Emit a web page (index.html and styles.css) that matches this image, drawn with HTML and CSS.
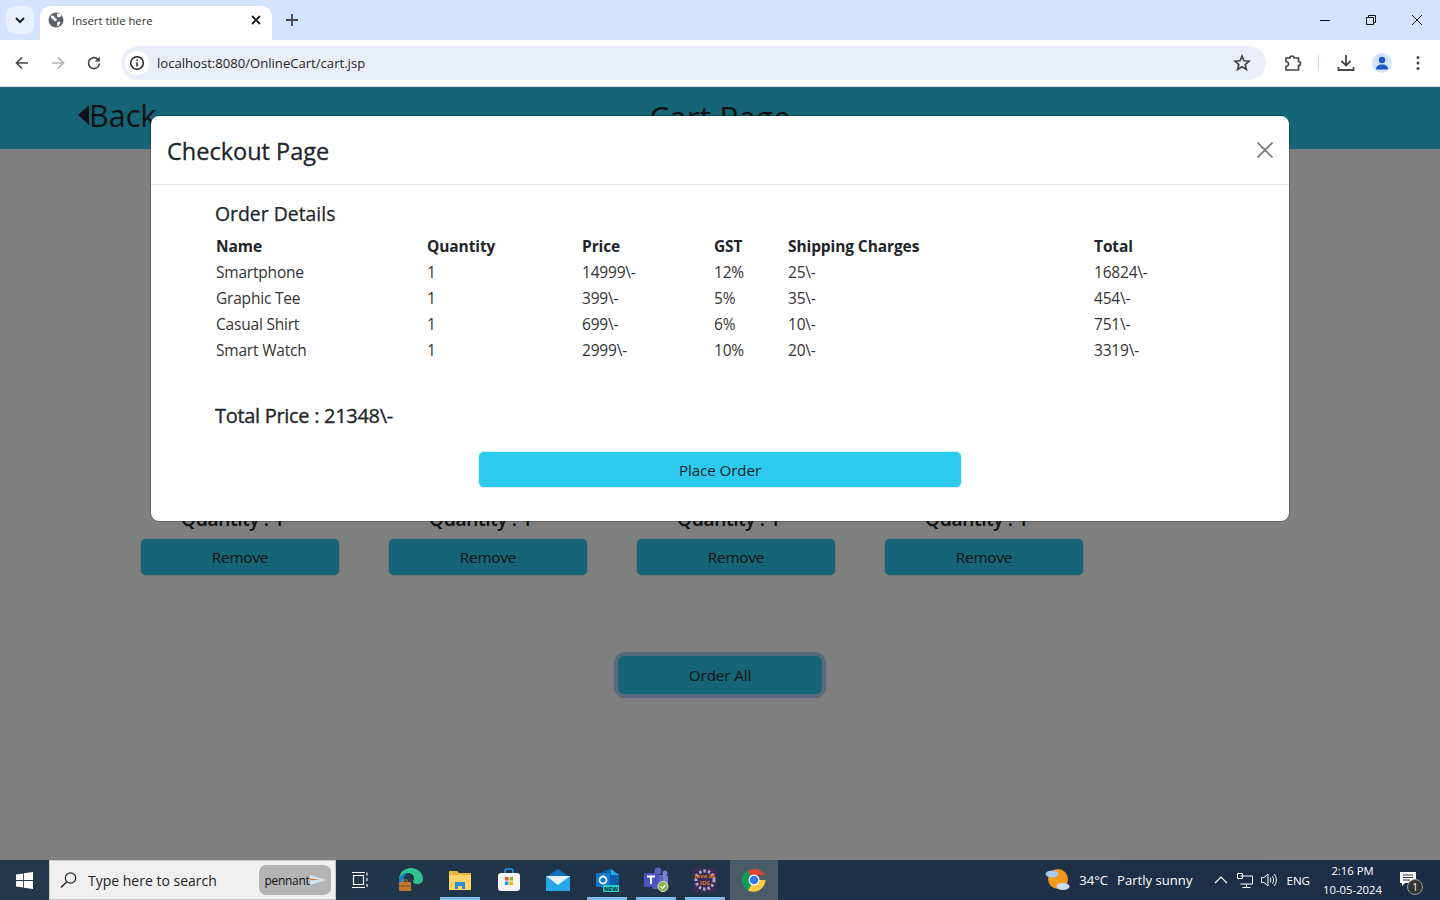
FILE: index.html
```html
<!DOCTYPE html>
<html lang="en">
<head>
<meta charset="utf-8">
<title>Insert title here</title>
<link rel="stylesheet" href="styles.css">
</head>
<body>
<div class="screen">
  <div class="tabstrip">
    <div class="tabsearch"><svg width="12" height="12" viewBox="0 0 12 12"><path d="M2 4l4 4 4-4" fill="none" stroke="#1f1f1f" stroke-width="2"/></svg></div>
    <div class="tab">
      <svg class="favicon" width="16" height="16" viewBox="0 0 16 16"><circle cx="8" cy="8" r="7.5" fill="#5f6368"/><path d="M3 3.5l3 .5 1 2 2 1-1 2-2 0-1-2-2-1zM9 1.5l3 .5 1.5 2-2.500 1.500-2-1zM9.500 9.500l3 .5-1.500 3.500-2 .5z" fill="#fff"/></svg>
      <span class="tabtitle">Insert title here</span>
      <svg class="tabclose" width="10" height="10" viewBox="0 0 10 10"><path d="M1 1l8 8M9 1l-8 8" stroke="#1f1f1f" stroke-width="1.800"/></svg>
    </div>
    <svg class="newtab" width="12" height="12" viewBox="0 0 12 12"><path d="M6 0v12M0 6h12" stroke="#444746" stroke-width="1.800"/></svg>
    <div class="wincontrols">
      <svg width="46" height="40" viewBox="0 0 46 40"><path d="M18 20.500h10" stroke="#111" stroke-width="1"/></svg>
      <svg width="46" height="40" viewBox="0 0 46 40"><path d="M18.500 17.500h7v7h-7zM20.500 17v-1.500h7v7h-2" fill="none" stroke="#111" stroke-width="1"/></svg>
      <svg width="46" height="40" viewBox="0 0 46 40"><path d="M18 15l10 10M28 15l-10 10" stroke="#111" stroke-width="1"/></svg>
    </div>
  </div>
  <div class="toolbar">
    <svg class="navbtn" width="16" height="16" viewBox="0 0 16 16"><path d="M14 8H3M8 2.500L2.500 8 8 13.500" fill="none" stroke="#444746" stroke-width="1.700"/></svg>
    <svg class="navbtn" width="16" height="16" viewBox="0 0 16 16"><path d="M2 8h11M8 2.500L13.500 8 8 13.500" fill="none" stroke="#b0b3b8" stroke-width="1.700"/></svg>
    <svg class="navbtn" width="16" height="16" viewBox="0 0 16 16"><path d="M13.500 8.500A5.500 5.500 0 1 1 12 4.300" fill="none" stroke="#444746" stroke-width="1.700"/><path d="M13.800 1.500v5h-5z" fill="#444746"/></svg>
    <div class="omnibox">
      <span class="siteinfo"><svg width="16" height="16" viewBox="0 0 16 16"><circle cx="8" cy="8" r="6.300" fill="none" stroke="#1f1f1f" stroke-width="1.500"/><path d="M8 7.200v4.300M8 4.400v1.500" stroke="#1f1f1f" stroke-width="1.500"/></svg></span>
      <span class="url">localhost:8080/OnlineCart/cart.jsp</span>
      <svg class="star" width="18" height="18" viewBox="0 0 18 18"><path d="M9 2.200l2 4.600 5 .4-3.800 3.300 1.200 4.900L9 12.800l-4.400 2.600 1.200-4.900L2 7.200l5-.4z" fill="none" stroke="#444746" stroke-width="1.700"/></svg>
    </div>
    <svg class="extbtn" width="18" height="18" viewBox="0 0 18 18"><path d="M2 4h4a2 2 0 0 1 4 0h4.500v3.500a2 2 0 0 1 0 4V16H2v-3.500a2.500 2.500 0 0 0 0-5z" fill="none" stroke="#444746" stroke-width="1.700"/></svg>
    <span class="tooldiv"></span>
    <svg class="dlbtn" width="18" height="18" viewBox="0 0 18 18"><path d="M9 1v10M4.500 7L9 11.500 13.500 7M1.500 13v3h15v-3" fill="none" stroke="#444746" stroke-width="1.800"/></svg>
    <span class="avatar"><svg width="14" height="14" viewBox="0 0 14 14"><circle cx="7" cy="4" r="3.200" fill="#1a56c4"/><path d="M1 13.500c0-3.500 2.500-5 6-5s6 1.500 6 5z" fill="#1a56c4"/></svg></span>
    <svg class="kebab" width="4" height="16" viewBox="0 0 4 16"><circle cx="2" cy="2.500" r="1.500" fill="#444746"/><circle cx="2" cy="8" r="1.500" fill="#444746"/><circle cx="2" cy="13.500" r="1.500" fill="#444746"/></svg>
  </div>

  <main class="viewport">
    <header class="pagehead">
      <a class="back"><span class="backarrow"></span>Back</a>
      <h1 class="pagetitle">Cart Page</h1>
    </header>
    <section class="cards">
      <div class="card"><p class="qty">Quantity : 1</p><button class="btn teal wide">Remove</button></div>
      <div class="card"><p class="qty">Quantity : 1</p><button class="btn teal wide">Remove</button></div>
      <div class="card"><p class="qty">Quantity : 1</p><button class="btn teal wide">Remove</button></div>
      <div class="card"><p class="qty">Quantity : 1</p><button class="btn teal wide">Remove</button></div>
    </section>
    <div class="orderrow"><button class="btn teal orderall">Order All</button></div>

    <div class="backdrop"></div>
    <div class="modal">
      <div class="modalhead">
        <h2 class="modaltitle">Checkout Page</h2>
        <svg class="modalclose" width="16" height="16" viewBox="0 0 16 16"><path d="M.5.500l15 15M15.500.500l-15 15" stroke="#7a7a7a" stroke-width="1.800"/></svg>
      </div>
      <div class="modalbody">
        <h3 class="sectitle">Order Details</h3>
        <table class="orders">
          <colgroup><col class="c1"><col class="c2"><col class="c3"><col class="c4"><col class="c5"><col class="c6"></colgroup>
          <thead><tr><th>Name</th><th>Quantity</th><th>Price</th><th>GST</th><th>Shipping Charges</th><th>Total</th></tr></thead>
          <tbody>
            <tr><td>Smartphone</td><td>1</td><td>14999\-</td><td>12%</td><td>25\-</td><td>16824\-</td></tr>
            <tr><td>Graphic Tee</td><td>1</td><td>399\-</td><td>5%</td><td>35\-</td><td>454\-</td></tr>
            <tr><td>Casual Shirt</td><td>1</td><td>699\-</td><td>6%</td><td>10\-</td><td>751\-</td></tr>
            <tr><td>Smart Watch</td><td>1</td><td>2999\-</td><td>10%</td><td>20\-</td><td>3319\-</td></tr>
          </tbody>
        </table>
        <h3 class="totalprice">Total Price : 21348\-</h3>
        <div class="placerow"><button class="btn place">Place Order</button></div>
      </div>
    </div>
  </main>

  <footer class="taskbar">
    <span class="startbtn"><svg width="17" height="17" viewBox="0 0 17 17"><path d="M0 2.400L7.200 1.400V8H0zM8 1.300L17 0v8H8zM0 9h7.200v6.600L0 14.600zM8 9h9v8l-9-1.300z" fill="#fff"/></svg></span>
    <div class="searchbox">
      <svg width="18" height="18" viewBox="0 0 18 18"><circle cx="10.500" cy="7" r="5.200" fill="none" stroke="#222" stroke-width="1.200"/><path d="M6.800 10.700L1 16.500" stroke="#222" stroke-width="1.400"/></svg>
      <span class="searchtext">Type here to search</span>
      <span class="pennant"><span class="pennanttext">pennant</span><svg width="16" height="10" viewBox="0 0 16 10"><path d="M0 0l16 5-16 5z" fill="#cfe6f2"/><path d="M0 3.500l10 1.300-10 .4z" fill="#e8732a"/></svg></span>
    </div>
    <span class="taskicon gapped"><svg class="taskview" width="18" height="18" viewBox="0 0 18 18"><path d="M2.500 4.500h10v9h-10zM1 1.500h13M1 16.500h13M16 1.500v3M16 7v3M16 13v3" fill="none" stroke="#fff" stroke-width="1.100"/></svg></span>
    <span class="taskicon"><svg width="26" height="26" viewBox="0 0 26 26"><path d="M1 13C1 5 7 1 13 1c7 0 12 5 12 11 0 3-2 5-6 5-3 0-4-1-4-3 1-1 1-2 1-3 0-3-3-5-6-5C6 6 2 9 1 13z" fill="#2fc48d"/><path d="M1 13c1-4 5-7 9-7-4 2-5 6-4 10 1 3 4 6 8 7-1 1-2 1-3 1C5 24 1 19 1 13z" fill="#0c7fd0"/><rect x="1" y="15" width="12" height="9" rx="1" fill="#c47a2a"/><rect x="5" y="13" width="4" height="3" fill="none" stroke="#c47a2a"/><rect x="1" y="18.500" width="12" height="1" fill="#7a4a14"/></svg></span>
    <span class="taskicon open"><svg width="22" height="20" viewBox="0 0 22 20"><path d="M0 1h8l2 2h12v16H0z" fill="#e6b53c"/><rect y="5" width="22" height="15" fill="#fbd666"/><path d="M6 12h10v7h-3v-3H9v3H6z" fill="#2a8fd8"/></svg></span>
    <span class="taskicon"><svg width="24" height="24" viewBox="0 0 24 24"><path d="M8 6V3a2 2 0 0 1 2-2h4a2 2 0 0 1 2 2v3" fill="none" stroke="#1aa0e8" stroke-width="1.500"/><rect x="1" y="5" width="22" height="18" rx="3" fill="#f4f4f4"/><rect x="8" y="9" width="3.500" height="3.500" fill="#e8502a"/><rect x="12.500" y="9" width="3.500" height="3.500" fill="#7db92a"/><rect x="8" y="13.500" width="3.500" height="3.500" fill="#1aa0e8"/><rect x="12.500" y="13.500" width="3.500" height="3.500" fill="#f4b400"/></svg></span>
    <span class="taskicon"><svg width="24" height="22" viewBox="0 0 24 22"><path d="M12 0l12 8v14H0V8z" fill="#0d6ec0"/><path d="M0 7h24v15H0z" fill="#26a8ea"/><path d="M0 7l12 9 12-9z" fill="#e8f4fb"/></svg></span>
    <span class="taskicon open"><svg width="24" height="24" viewBox="0 0 24 24"><path d="M8 3l8-2 8 6v12H8z" fill="#0a5ea8"/><path d="M16 1l8 6h-8z" fill="#28a8ea"/><rect x="1" y="5" width="14" height="14" rx="1" fill="#0f78d4"/><circle cx="8" cy="12" r="3.500" fill="none" stroke="#fff" stroke-width="1.800"/><rect x="8" y="17" width="16" height="7" rx="1" fill="#22d3c8"/><text class="newbadge" x="16" y="23">NEW</text></svg></span>
    <span class="taskicon open"><svg width="26" height="26" viewBox="0 0 26 26"><circle cx="15" cy="4" r="3.500" fill="#5d63b8"/><circle cx="22" cy="6" r="2.500" fill="#7b83d6"/><rect x="15" y="8" width="10" height="11" rx="3" fill="#7b83d6"/><rect x="9" y="8" width="11" height="14" rx="2" fill="#5d63b8"/><rect x="1" y="6" width="14" height="14" rx="1.500" fill="#4b53bc"/><path d="M4 9.500h8M8 9.500V17" stroke="#fff" stroke-width="2"/><circle cx="20" cy="19.500" r="5" fill="#8ab440" stroke="#dfe8d0"/><path d="M17.500 19.500l2 2 3-3.500" fill="none" stroke="#fff" stroke-width="1.300"/></svg></span>
    <span class="taskicon open"><span class="javaide"><svg width="24" height="24" viewBox="0 0 24 24"><rect width="24" height="24" rx="2" fill="#3a2a5c"/><circle cx="12" cy="12" r="9" fill="none" stroke="#b0aab8" stroke-width="3" stroke-dasharray="2.500 2"/><text class="javatext" x="12" y="10">Java EE</text><text class="javatext" x="12" y="17">IDE</text></svg></span></span>
    <span class="taskicon active"><svg width="24" height="24" viewBox="0 0 24 24"><path d="M12 12L5.200 3.700A12 12 0 0 1 23 7H12z" fill="#db4437"/><path d="M12 12l-6 10.400A12 12 0 0 1 4.700 2.600z" fill="#0f9d58"/><path d="M12 12h11.500A12 12 0 0 1 6 22.400z" fill="#ffcd40"/><circle cx="12" cy="12" r="5.500" fill="#fff"/><circle cx="12" cy="12" r="4.300" fill="#3b78e7"/></svg></span>
    <div class="tray">
      <svg class="weather" width="25" height="24" viewBox="0 0 25 24"><circle cx="13" cy="11" r="10" fill="#f39a1e"/><ellipse cx="7" cy="6" rx="6.500" ry="3.500" fill="#a9c9ea"/><ellipse cx="18" cy="18.500" rx="6.500" ry="3.500" fill="#c7dcf2"/></svg>
      <span class="trayw">34°C</span>
      <span class="trayw">Partly sunny</span>
      <svg class="chev" width="14" height="8" viewBox="0 0 14 8"><path d="M1 7l6-6 6 6" fill="none" stroke="#fff" stroke-width="1.100"/></svg>
      <svg class="net" width="16" height="15" viewBox="0 0 16 15"><path d="M3.500 3H15.500V11H3.500M9.500 11v3M5.500 14.500h8M.5.500h5v5h-5z" fill="none" stroke="#fff"/></svg>
      <svg class="vol" width="16" height="14" viewBox="0 0 16 14"><path d="M.5 4.500h2.500L7 1v12L3 9.500H.5zM9 4.500c1 1.500 1 3.500 0 5M11 3c2 2 2 6 0 8M13 1c3 3 3 9 0 12" fill="none" stroke="#fff"/></svg>
      <span class="lang">ENG</span>
      <div class="clock"><span>2:16 PM</span><span>10-05-2024</span></div>
      <span class="notif"><svg width="16" height="15" viewBox="0 0 16 15"><path d="M0 0h16v11H5l-3 3v-3H0z" fill="#fff"/><path d="M3 3h10M3 5.500h10M3 8h7" stroke="#333"/></svg><span class="notifcount">1</span></span>
    </div>
  </footer>
</div>
</body>
</html>
```
FILE: styles.css
```css
* { box-sizing: border-box; }
html, body { margin: 0; height: 100%; overflow: hidden; }
body { font-family: "Open Sans", "Noto Sans", sans-serif; color: #212529; background: #fff; }
.screen { display: flex; flex-direction: column; width: 1440px; height: 900px; }

/* browser chrome */
.tabstrip { height: 40px; background: #d3e3fd; display: flex; align-items: flex-end; flex: none; }
.tabsearch { width: 28px; height: 28px; margin: 0 6px 6px 6px; background: #e8effd; border-radius: 8px; display: flex; align-items: center; justify-content: center; }
.tab { width: 232px; height: 34px; background: #fff; border-radius: 10px 10px 0 0; display: flex; align-items: center; padding: 0 11px 6px 8px; }
.favicon { flex: none; }
.tabtitle { font-size: 11.300px; margin-left: 8px; flex: 1; color: #333; white-space: nowrap; }
.newtab { margin: 0 0 14px 14px; }
.wincontrols { margin-left: auto; display: flex; align-self: stretch; }
.wincontrols svg { display: block; }
.toolbar { height: 47px; flex: none; background: #fff; border-radius: 10px 10px 0 0; border-bottom: 1px solid #d9d9d6; display: flex; align-items: center; padding: 0 0 1px 14px; }
.navbtn { flex: none; margin-right: 20px; }
.omnibox { width: 1145px; height: 34px; margin-left: -1px; background: #e9eef8; border-radius: 17px; display: flex; align-items: center; padding: 0 15px 0 4px; flex: none; }
.siteinfo { width: 24px; height: 24px; border-radius: 50%; background: #fff; display: flex; align-items: center; justify-content: center; flex: none; }
.url { font-size: 13.100px; margin-left: 8px; color: #1f1f1f; flex: 1; white-space: nowrap; }
.star { flex: none; }
.extbtn { margin-left: 18px; flex: none; }
.tooldiv { width: 1px; height: 16px; background: #c7dbf8; margin-left: 16px; flex: none; }
.dlbtn { margin-left: 18px; flex: none; }
.avatar { width: 20px; height: 20px; margin-left: 17px; border-radius: 50%; background: #d3e3fd; display: flex; align-items: center; justify-content: center; flex: none; }
.kebab { margin-left: 24px; flex: none; }

/* page */
.viewport { position: relative; flex: 1; overflow: hidden; background: #fff; }
.pagehead { height: 62px; background: #2acaec; position: relative; display: flex; align-items: center; justify-content: center; }
.back { position: absolute; left: 78px; top: 7px; font-size: 30.500px; line-height: 42px; display: flex; align-items: center; }
.backarrow { width: 0; height: 0; border-style: solid; border-width: 10px 11px 10px 0; border-color: transparent #212529 transparent transparent; }
.pagetitle { margin: 0 0 3px; font-size: 31.700px; font-weight: 500; line-height: 58px; }
.cards { display: flex; gap: 48px; padding: 356px 0 0 140px; }
.card { width: 200px; }
.qty { margin: 0 0 5px 41px; font-size: 19px; font-weight: 600; line-height: 28px; letter-spacing: -.3px; }
.btn { font: inherit; font-size: 15.200px; letter-spacing: -.1px; line-height: 24px; border: 1px solid transparent; border-radius: 6px; color: #212529; padding: 5px 12px; display: block; }
.teal { background: #2acaec; }
.wide { width: 200px; height: 38px; border-color: #e8e8e8; }
.orderrow { display: flex; justify-content: center; margin-top: 80px; }
.orderall { width: 204px; height: 38px; box-shadow: 0 0 0 4px rgba(13, 110, 253, .3); }

.backdrop { position: absolute; inset: 0; background: rgba(0, 0, 0, .5); }
.modal { position: absolute; left: 150px; top: 28px; width: 1140px; height: 407px; background: #fff; border: 1px solid rgba(0, 0, 0, .2); background-clip: padding-box; border-radius: 9px; }
.modalhead { height: 69px; border-bottom: 1px solid #dee2e6; display: flex; align-items: center; justify-content: space-between; padding: 1px 16px 0; }
.modaltitle { margin: 0; font-size: 23.500px; font-weight: 500; line-height: 36px; -webkit-text-stroke: .3px #212529; }
.modalclose { margin: 0 0 2px; }
.modalbody { padding: 15px 64px 0; }
.sectitle { margin: 0 0 5px; font-size: 19.400px; font-weight: 500; line-height: 28px; -webkit-text-stroke: .25px #212529; }
.orders { border-collapse: collapse; table-layout: fixed; width: 1010px; font-size: 15.500px; line-height: 24px; letter-spacing: -.2px; }
.orders th { text-align: left; font-weight: 700; padding: 1px; letter-spacing: -.1px; }
.orders td { padding: 1px; color: #333; }
.c1 { width: 211px; }
.c2 { width: 155px; }
.c3 { width: 132px; }
.c4 { width: 74px; }
.c5 { width: 306px; }
.c6 { width: 132px; }
.totalprice { margin: 39px 0 0; font-size: 20px; font-weight: 500; line-height: 28px; letter-spacing: -.3px; -webkit-text-stroke: .35px #212529; }
.placerow { display: flex; justify-content: center; margin-top: 21px; }
.place { width: 484px; height: 37px; background: #2bcaee; border-color: #d8f0f8; }

/* taskbar */
.taskbar { height: 40px; flex: none; background: linear-gradient(90deg, #22394a, #1b2d45); display: flex; align-items: stretch; color: #fff; position: relative; z-index: 1; }
.startbtn { width: 49px; display: flex; align-items: center; justify-content: center; flex: none; }
.searchbox { width: 287px; background: #f0f0f0; border: 1px solid #c8c8c8; display: flex; align-items: center; padding: 0 4px 0 10px; color: #222; flex: none; }
.searchtext { font-size: 14px; margin-left: 10px; flex: 1; white-space: nowrap; }
.pennant { width: 72px; height: 30px; background: #b4b4b4; border-radius: 7px; display: flex; align-items: center; justify-content: center; }
.pennanttext { font-size: 12px; letter-spacing: -.3px; color: #111; }
.taskicon { width: 49px; display: flex; align-items: center; justify-content: center; flex: none; }
.taskicon.open { background: linear-gradient(#7fbcec, #7fbcec) center bottom / 40px 3px no-repeat; }
.taskicon.active { background: #4b5c66; width: 48px; margin-left: 1px; }
.gapped { margin-left: 1px; }
.taskview { margin-right: 4px; }
.newbadge { font: 700 6px "Open Sans", sans-serif; fill: #123; text-anchor: middle; }
.javatext { font: 700 6px "Open Sans", sans-serif; fill: #e07a1e; text-anchor: middle; }
.javaide { display: flex; }
.tray { margin-left: auto; display: flex; align-items: center; padding-right: 12px; }
.weather { margin-right: 9px; }
.trayw { font-size: 13.100px; margin-right: 9px; white-space: nowrap; }
.chev { margin: 0 9px 0 13px; }
.net { margin-right: 8px; }
.vol { margin-right: 9px; }
.lang { font-size: 11.600px; margin-right: 13px; }
.clock { display: flex; flex-direction: column; align-items: center; font-size: 11.300px; line-height: 19px; margin-right: 18px; }
.notif { position: relative; width: 28px; height: 32px; display: flex; padding-top: 8px; }
.notifcount { position: absolute; left: 7px; top: 15px; width: 16px; height: 16px; border-radius: 50%; background: #333; border: 1px solid #999; font-size: 10px; line-height: 14px; text-align: center; }
```
